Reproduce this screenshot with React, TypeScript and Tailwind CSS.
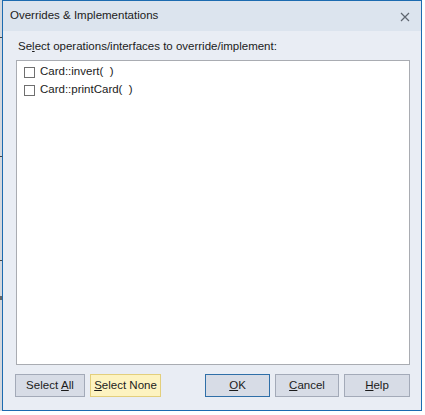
import React from 'react';

const font = { fontFamily: '"Liberation Sans", Arial, sans-serif' };

const Btn: React.FC<{ children: React.ReactNode; className?: string }> = ({ children, className }) => (
  <button
    className={`h-[23px] flex items-center justify-center text-[11.5px] text-[#1b1b1b] border shrink-0 ${className ?? ''}`}
  >
    {children}
  </button>
);

const Item: React.FC<{ label: string }> = ({ label }) => (
  <div className="flex items-center gap-[5px] h-[18px]">
    <span className="w-[11px] h-[11px] border border-[#6f6f6f] bg-white shrink-0"></span>
    <span className="text-[11.5px] text-[#1b1b1b] whitespace-pre">{label}</span>
  </div>
);

export default function App() {
  return (
    <div className="w-[425px] h-[415px] bg-white flex" style={font}>
      <div className="w-[2px] h-[411px] bg-[#d4d8de] flex flex-col shrink-0">
        <div className="h-[37px]"></div>
        <div className="h-[1px] bg-[#444]"></div>
        <div className="h-[118px]"></div>
        <div className="h-[1px] bg-[#444]"></div>
        <div className="h-[103px]"></div>
        <div className="h-[1px] bg-[#444]"></div>
        <div className="h-[35px]"></div>
        <div className="h-[4px] bg-[#666]"></div>
      </div>
      <div className="w-[420px] h-[411px] shrink-0 border border-[#1c6bb0] bg-[#e9edf4] flex flex-col">
        <div className="h-[30px] bg-[#dce4ee] flex items-center justify-between pl-[7px] pr-[11px]">
          <span className="text-[11.5px] text-[#1b1b1b]">Overrides &amp; Implementations</span>
          <svg width="10" height="10" viewBox="0 0 10 10" className="mt-[1px]">
            <path d="M1 1 L9 9 M9 1 L1 9" stroke="#5f6670" strokeWidth="1.2" />
          </svg>
        </div>
        <div className="flex-1 flex flex-col pl-[13px] pr-[11px] pt-[7px]">
          <div className="text-[11.5px] text-[#1b1b1b] pl-[2px] h-[17px] leading-[17px]">
            Se<span className="underline">l</span>ect operations/interfaces to override/implement:
          </div>
          <div className="mt-[5px] h-[305px] bg-white border border-[#a9acb2] flex flex-col pl-[7px] pt-[2px]">
            <Item label="Card::invert(  )" />
            <Item label="Card::printCard(  )" />
          </div>
          <div className="flex mt-[9px] ml-[-1px]">
            <Btn className="w-[70px] bg-[#d7dce6] border-[#a3aab8]">
              Select <span className="underline ml-[3px]">A</span>ll
            </Btn>
            <Btn className="w-[71px] ml-[5px] bg-[#fdf3c0] border-[#e3cf7c]">
              <span className="underline">S</span>elect None
            </Btn>
            <div className="flex-1"></div>
            <Btn className="w-[65px] bg-[#d7dce6] border-[#2f6fa8]">
              <span className="underline">O</span>K
            </Btn>
            <Btn className="w-[64px] ml-[5px] bg-[#d7dce6] border-[#a3aab8]">
              <span className="underline">C</span>ancel
            </Btn>
            <Btn className="w-[66px] ml-[5px] bg-[#d7dce6] border-[#a3aab8]">
              <span className="underline">H</span>elp
            </Btn>
          </div>
        </div>
      </div>
    </div>
  );
}
